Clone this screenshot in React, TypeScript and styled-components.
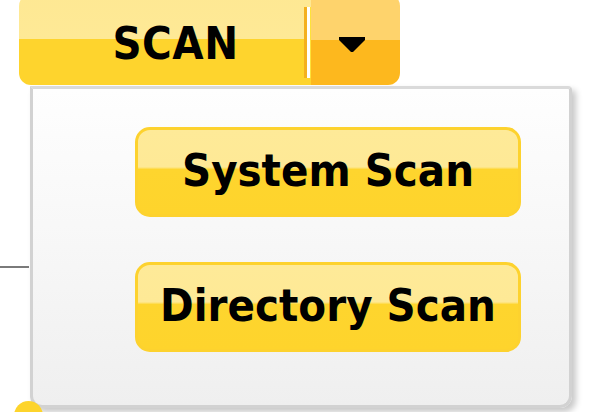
import styled, { createGlobalStyle } from "styled-components";

const GlobalStyle = createGlobalStyle`
  html, body {
    margin: 0;
    padding: 0;
    background: #ffffff;
  }
`;

const Page = styled.div`
  position: relative;
  width: 600px;
  height: 412px;
  overflow: hidden;
  background: #ffffff;
  font-family: "DejaVu Sans Condensed", "DejaVu Sans", Verdana, sans-serif;
`;

const mainFill = `linear-gradient(
  to bottom,
  #fee893 0%,
  #fee996 49%,
  #fed42d 50%,
  #fed42d 100%
)`;

const SplitButton = styled.div`
  display: flex;
  margin-left: 19px;
  margin-top: -6px;
  width: 381px;
  height: 91px;
  border-radius: 12px;
  overflow: hidden;
`;

const MainPart = styled.div`
  flex: 1;
  display: flex;
  align-items: center;
  justify-content: center;
  padding: 8px 0 0 28px;
  background: ${mainFill};
  font-weight: 700;
  font-size: 45px;
  color: #000;
  letter-spacing: 0.5px;
`;

const Divider = styled.div`
  width: 7px;
  display: flex;
  padding: 13px 0 7px;
  box-sizing: border-box;
  background: ${mainFill};

  &::before {
    content: "";
    flex: 1;
    background: linear-gradient(
      to right,
      #f4b01e 0,
      #f4b01e 3px,
      #ffffff 3px,
      #ffffff 6px,
      #fde23a 6px
    );
  }
`;

const ArrowPart = styled.div`
  width: 89px;
  box-sizing: border-box;
  display: flex;
  align-items: flex-start;
  justify-content: center;
  padding-top: 43px;
  padding-right: 8px;
  background: linear-gradient(
    to bottom,
    #fed36c 0%,
    #fed36c 50%,
    #fdb81e 51%,
    #fdb81e 100%
  );
`;

const Panel = styled.div`
  display: flex;
  flex-direction: column;
  align-items: flex-end;
  gap: 45px;
  margin-left: 30px;
  margin-top: 1px;
  width: 542px;
  height: 322px;
  padding: 38px 48px 0 0;
  box-sizing: border-box;
  background: linear-gradient(to bottom, #fefefe 0%, #f7f7f7 50%, #efefef 100%);
  border: 3px solid #d2d2d2;
  border-top-color: #dadada;
  border-radius: 0 4px 12px 12px;
  box-shadow: 4px 4px 6px rgba(0, 0, 0, 0.22);
`;

const MenuButton = styled.button`
  width: 386px;
  height: 90px;
  flex-shrink: 0;
  display: flex;
  align-items: center;
  justify-content: center;
  padding: 0 0 4px;
  border: 3px solid #fdd22e;
  border-radius: 15px;
  background: linear-gradient(
    to bottom,
    #feea98 0%,
    #fee996 44%,
    #fed52e 47%,
    #fed42c 100%
  );
  font-family: "DejaVu Sans Condensed", "DejaVu Sans", Verdana, sans-serif;
  font-weight: 700;
  font-size: 45px;
  color: #000;
  cursor: pointer;
`;

const Connector = styled.div`
  position: absolute;
  left: 0;
  top: 266px;
  width: 29px;
  height: 2px;
  background: #7a7a7a;
`;

const Knob = styled.div`
  position: absolute;
  left: 14px;
  top: 401px;
  width: 29px;
  height: 29px;
  border-radius: 50%;
  background: #fdd42c;
`;

function CaretDown() {
  return (
    <svg width="26" height="15" viewBox="0 0 26 15">
      <polygon points="0,0 26,0 26,3 14,15 12,15 0,3" fill="#000" />
    </svg>
  );
}

export default function App() {
  return (
    <>
      <GlobalStyle />
      <Page>
        <Connector />
        <SplitButton>
          <MainPart>SCAN</MainPart>
          <Divider />
          <ArrowPart>
            <CaretDown />
          </ArrowPart>
        </SplitButton>
        <Panel>
          <MenuButton>System Scan</MenuButton>
          <MenuButton>Directory Scan</MenuButton>
        </Panel>
        <Knob />
      </Page>
    </>
  );
}
